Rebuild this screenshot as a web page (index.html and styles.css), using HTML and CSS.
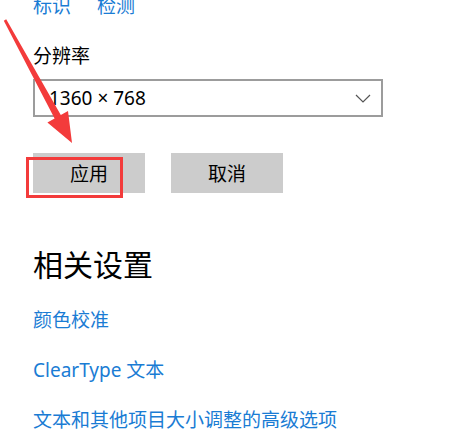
FILE: index.html
```html
<!DOCTYPE html>
<html lang="zh-CN">
<head>
<meta charset="utf-8">
<title>显示设置</title>
<link rel="stylesheet" href="styles.css">
</head>
<body>
<div class="page">
  <div class="top-links">
    <a class="link" href="#">标识</a>
    <a class="link" href="#">检测</a>
  </div>
  <div class="label">分辨率</div>
  <div class="select">
    <span class="select-value">1360 × 768</span>
    <svg class="chevron" width="16" height="9" viewBox="0 0 16 9"><path d="M1 1 L8 8 L15 1" fill="none" stroke="#555" stroke-width="1.2"/></svg>
  </div>
  <div class="buttons">
    <div class="btn-wrap">
      <button class="btn">应用</button>
      <div class="highlight"></div>
    </div>
    <button class="btn">取消</button>
  </div>
  <h2 class="heading">相关设置</h2>
  <div class="related">
    <a class="link" href="#">颜色校准</a>
    <a class="link" href="#">ClearType 文本</a>
    <a class="link" href="#">文本和其他项目大小调整的高级选项</a>
  </div>
  <svg class="arrow" width="455" height="434" viewBox="0 0 455 434">
    <polygon points="3.8,20.8 6.2,19.2 60.8,115.0 68,111 72,143 47.4,122.4 54.6,118.4" fill="#f33b3b"/>
  </svg>
</div>
</body>
</html>
```

FILE: styles.css
```css
html, body {
  margin: 0;
  padding: 0;
  background: #fff;
}
body {
  font-family: "Noto Sans", "Noto Sans CJK SC", sans-serif;
  color: #000;
  overflow: hidden;
}
.page {
  position: relative;
  width: 455px;
  height: 434px;
  padding-left: 33px;
  box-sizing: border-box;
  display: flex;
  flex-direction: column;
  align-items: flex-start;
}
.link {
  color: #1a7cd4;
  text-decoration: none;
  font-size: 19px;
  line-height: 19px;
  white-space: nowrap;
}
.top-links {
  display: flex;
  gap: 26px;
  margin-top: -3px;
}
.label {
  margin-top: 31px;
  font-size: 19px;
  line-height: 19px;
}
.select {
  margin-top: 13px;
  width: 350px;
  height: 38px;
  box-sizing: border-box;
  border: 2px solid #9c9c9c;
  display: flex;
  align-items: center;
  justify-content: space-between;
  padding: 0 10px 0 14px;
}
.select-value {
  font-size: 19px;
  line-height: 19px;
}
.chevron {
  display: block;
  margin-top: 1px;
}
.buttons {
  margin-top: 36px;
  display: flex;
  gap: 26px;
}
.btn-wrap {
  position: relative;
}
.btn {
  display: block;
  width: 112px;
  height: 40px;
  border: none;
  background: #cccccc;
  font-family: "Noto Sans", "Noto Sans CJK SC", sans-serif;
  font-size: 19px;
  color: #000;
  padding: 0;
}
.highlight {
  position: absolute;
  left: -7px;
  top: 4px;
  width: 97px;
  height: 41px;
  box-sizing: border-box;
  border: 3px solid #f33b3b;
}
.heading {
  margin: 57px 0 0;
  font-size: 30px;
  line-height: 30px;
  font-weight: normal;
}
.related {
  margin-top: 31px;
  display: flex;
  flex-direction: column;
  align-items: flex-start;
  gap: 31px;
}
.arrow {
  position: absolute;
  left: 0;
  top: 0;
  pointer-events: none;
}
```
